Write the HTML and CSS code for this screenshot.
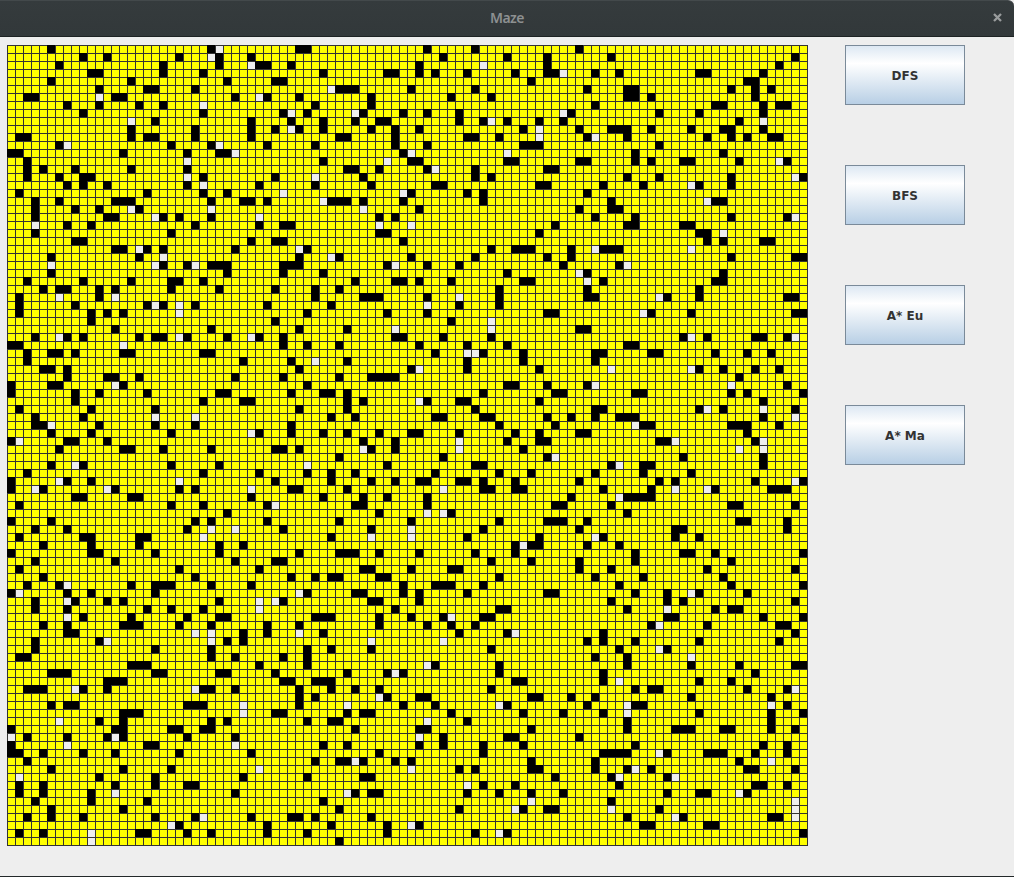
FILE: index.html
```html
<!DOCTYPE html>
<html lang="en">
<head>
<meta charset="utf-8">
<title>Maze</title>
<link rel="stylesheet" href="styles.css">
</head>
<body>
<div class="window">
  <header class="titlebar">
    <span class="title">Maze</span>
    <svg class="close" viewBox="0 0 9 9"><path d="M1 1L8 8M8 1L1 8"/></svg>
  </header>
  <main class="content">
    <div class="maze" id="maze"></div>
    <div class="buttons">
      <button class="btn">DFS</button>
      <button class="btn">BFS</button>
      <button class="btn">A* Eu</button>
      <button class="btn">A* Ma</button>
    </div>
  </main>
</div>
<script src="maze.js"></script>
</body>
</html>
```
FILE: styles.css
```css
body {
  margin: 0;
  background: #eeeeee;
}

.window {
  box-sizing: border-box;
  height: 877px;
  display: flex;
  flex-direction: column;
  border-bottom: 1px solid #232829;
}

.titlebar {
  box-sizing: border-box;
  height: 37px;
  padding-bottom: 2px;
  display: grid;
  grid-template-columns: 40px 1fr 40px;
  align-items: center;
  background: linear-gradient(#353b3d, #32383a);
  border-top: 1px solid #43494b;
  border-bottom: 1px solid #1d2223;
  border-top-right-radius: 6px;
}

.title {
  grid-column: 2;
  text-align: center;
  font: 600 14px/20px "Noto Sans", "Open Sans", sans-serif;
  letter-spacing: -0.6px;
  color: #8d9091;
}

.close {
  width: 9px;
  height: 9px;
  justify-self: center;
  margin-left: 6px;
  stroke: #999c9d;
  stroke-width: 2.3;
  fill: none;
}

.content {
  flex: 1;
  display: flex;
  align-items: flex-start;
  gap: 37px;
  padding: 8px 7px 0;
}

.maze {
  width: 801px;
  height: 801px;
  display: grid;
  grid-template-columns: repeat(100, 8px);
  grid-template-rows: repeat(100, 8px);
  background-color: #ffff00;
  background-image:
    linear-gradient(90deg, #333333 1px, transparent 1px),
    linear-gradient(#333333 1px, transparent 1px);
  background-size: 8px 8px;
}

.wall {
  background: #000000;
}

.open {
  margin: 1px 0 0 1px;
  background: #eeeeee;
}

.buttons {
  display: flex;
  flex-direction: column;
  gap: 60px;
}

.btn {
  box-sizing: border-box;
  width: 120px;
  height: 60px;
  padding: 2px 0 0;
  border: 1px solid #7a8a99;
  border-radius: 0;
  background: linear-gradient(#dde8f3 0%, #ffffff 30%, #b8cfe5 100%);
  font: bold 12px/16px "DejaVu Sans", sans-serif;
  color: #333333;
}
```
FILE: maze.js
```javascript
// Each section covers a band of columns starting at `col`, rows starting at `row`.
// Rows are separated by "/"; numbers are walls, numbers with "w" are open cells.
const sections = [
  { col: 0, row: 0, rows: "5 25 w26/9 12 21 w25 26 30/6 19 26 w30 31 32/10 11 19 24/5 15 27 33/11 17 18 23/2 3 w11 13 14 28 w31 32/7 11 16 19 w24/9 24/w15 18 30/15 23 30 33/1 2 15 17 18 23 30/6 w7 20 25 w26 32/0 1 14 22 26 27 w28/2 w22/2 4 8 15 22/2 6 9 10 w22 24 33/7 9 12 22 w24 31/1 17 24 27/3 6 13 14 15 25 29 30 32/3 8 11 w15 16 w25/3 12 13 w18 19 21 25 w31/w3 7 10 23 31/3 20/8 9 30 33/13 14 w16 17 19 28/5 16 w19/w5 w18 19 22 w23 25 26 27/5 27/2 9 15 20 21 24/4 6 7 11 13 20 26 33/1 w6 11 w13/1 8 17 w18 19 w21 23 32/1 10 12 14 w21" },
  { col: 34, row: 0, rows: "2 3 18 24/20 28 33/1 17 w25 33/5 13 14 17 19 23 29 33/0 31/w6 7 8 9 16 24/2 11 21 26/4 11/0 w1 3 w9 10 15 18 22/1 5 9 12 13 22 25 w26 28 32/w1 2 5 11 14 17 30 w32/7 8 14 23 24 27 w32/4 14 18 30 31 32/15 w16 w28/5 w13 16 17 28 29/8 9 12 18 w19 24 33/w4 10 24 26/4 11 19 20 32 33/w0 w15 16 23 25/w5 6 7 8 10 15 25/w10 17/12 14/0 1 w12 w16/12 13 32/0 15/w2 3 26 29 30 31/2 w6 7 16 24 33/0 1 2 13 w14 18 22/0 5 28/9 14 15 17 21 30 31/4 7 27/4 10 11 12 18 w22 27/6 w18 22 27/3 13 18 33" },
  { col: 68, row: 0, rows: "3/7 30/28/0 w1 5 8 18 19 26/24 25/4 9 10 22 25 27/9 10 12 25/5 20 21 26 28 29/w1 2 13 18 26/1 23 w26/3 7 8 9 12 17 21 22 26/4 w5 9 19 22 24 27 28/13/10 21/3 4 10 12 16 17 23 w28 29/0/9 13 22 w30 31/6 11 w17 18 22/4/7 w19 20 21/3 7 8/5 10 22 29 w30/0 9 10 16 17/18 19 w21/19 21 26 27/2 w5 6 7 8 w17/2 22 30 31/1 8 w9/w3 4 21/w4 6 20 21/4 18/4 5 w13 14 18 29 30//0 w11 12 17 30 31" },
  { col: 0, row: 34, rows: "10 33/13 25/3 w6 7 9 16 18 19 w21 22 27 w30 31/0 1 w14/2 5 6 8 14 15 24 25/2 29/4 5 7/7 12 13 16 28/0 5 6 w13 14/0 8 11 17 26 27/8 24 29 30/1 10 18/3 9 w18 w23/3 4 w5 11 18 23/5 10 20 w30 31/0 w1 7 8 12/6 14 15 19 25 33//5 w8 9 20 26/2 24 31/0 w6 7 10 w21 33/0 w3 4 w12 13 21 23 w30/8 9 15 16 30/1 20 24 32 w33/27/0 5 23 25 32/3 7 22 w25 w28/1 9 10 16 17 w24/4 10 16 26 29/0 10 11 18 26/3 13 28 33/1 21 31/4 23/2 6 w7 15 18 19 20 25 30" },
  { col: 34, row: 34, rows: "21 w26/2 8 w14 w26/0 14 15 20 26/0 3 7 17 23 28/19 w23 w24 25 30/1 w4 8 23 30/2 16 w17 23 32/0 7 11 12 13 14/3 28 29 33/1 5 6 8 25/8 10 w17 18 22 23 32/2 8 24/6 9 19 20 25 26 33/1 27/1 5 8 12 16 17 22 29 32/10 14 w22 28 32 33/0 2 w10 11 14 w22 30/7 20 33/w3 13 24 25/3 6 9 19 27 31/6 11 14 17 18 22 23 25 29/1 2 8 w20 25 26 29 30/5 10 13 18/9 10 18/12 w18 w20 21/7 16 27 33/0 11 w16 25/6 w11 w16 23 32/29 w30 31 32/2 7 8 9 12 17 24 29/0 26 31/10 11 16 21 22/1 4 6 7 12 13 27/15 19 20 21 25" },
  { col: 68, row: 34, rows: "/3 4/16 w17 19 25 26 29 w30/9 10/5 6 12 13 20 24 27/5/w7 w17 18 21 25 28/23/4 w5 w22 29/0 1 10 11 22 24 31/26/5 6 18 w19 21 w26 30/2 5 8 9 10 26 w30/0 w10 11 12 22 23 24 28/3 4 24/13 14 w15 25 w26/w23 w26/w0 16 26/7 w8 11 12 26/5 11 17/3 13 15 25 w30 31/6 12 w15 w19 20 27 28 29/2 w8 9 10 11 12/0 1 7 22 23 30/9/0 1 4 23 24 29/3 15 16 29/w5 6 15 18/4 8/10 16 17 20 31/3 10 22/3 7 19 30/5 11 21/8 22 31" },
  { col: 0, row: 68, rows: "0 w1 7 10 18/3 w7 8 12 14 26 w31 w33/3 7 17 20 24 w31/w7 9 15 22 26 27/4 7 14 15 16 21 25 32/7 8 w23 w25 29 32/3 11 w12 w25 27 29/3 18 25/1 2 25 28/15 16 17 31/5 6 7 18 19 26 27 33/12 13 14/2 3 4 w8 9 12 w23 24 25 28//5 7 8 22 23 24 w29/14 15 16 w29 33/w6 11 14 25 27/0 13 14 20 21 24 25/w0 2 7 12 w13 14 22 28/0 w7 17 18 w28/0 1 4 9 13 21 30/2/5 14 20 w31/w1 11 18 29/1 4 13 18 22 23/1 4 10 w13 28/3 10 17/5 14/2 5 9 18 23 w24 30/w20 21 32/1 4 w10 16 17 22 25 32/w10" },
  { col: 34, row: 68, rows: "w2 3 9 10 15 17 23 33/0 11 12 17/14 27 28/4 5 6 12 16 20 w21 25 26/2 12 18 21 24/w2 5 22 28 w29/w11 w20/3 6 11 26/0 3/3 w18 19 27/8 13 w14 15 27/0 1 4 5 6 29 30/2 6 9 12 26/2 4 w12 13 17 18 31 32/2 w8 15 19 w27 28/0 8 10 11 21 30/3 6 7 w18 23/9 17 18 31/w17 20 28 29/5 8 17 20 25 30/12 25/4 7 8 w9 10 14 16 31/w16 22 24 31 32/3 10 11/w23 25 29/w8 9 11 12 23 27 31/5 w31/7 22 w29 30 33/1 2 4 11/6 13 w16 17/3 13 24 w27 28/7" },
  { col: 68, row: 68, rows: "0 10 14 w17 18 24/7 14 16 30/9 w14 20 22 23/14 15 26 31/12 w13 19 28 29/6 30/4 6 10 18 28/8 w13 14/5 9 w17/9 17 23 30 31/6 25/6 w8 18 22/10 12 13 24 29 w30/2 5 17 27/4 w9 10 11 w27 29/1 6 w9 18 27 31/9 27/9 15 16 17 21 22 27 30/3/10 26 29/6 7 8 9 w13 14 19 20 21 25 29/5 23 w27/5 9 w10 12 24 25 30/0 7 w8 14 w15/8 25 26 29/1 14 18 19 w23 24/7 w30/0 w7 13 w30/9 w15 16 27 28 w30/11 12 19 20/31/" }
];

const maze = document.getElementById("maze");
for (const section of sections) {
  section.rows.split("/").forEach((line, r) => {
    for (const token of line.split(" ").filter(Boolean)) {
      const open = token[0] === "w";
      const col = section.col + Number(open ? token.slice(1) : token);
      const cell = document.createElement("i");
      cell.className = open ? "open" : "wall";
      cell.style.gridArea = `${section.row + r + 1} / ${col + 1}`;
      maze.append(cell);
    }
  });
}
```
